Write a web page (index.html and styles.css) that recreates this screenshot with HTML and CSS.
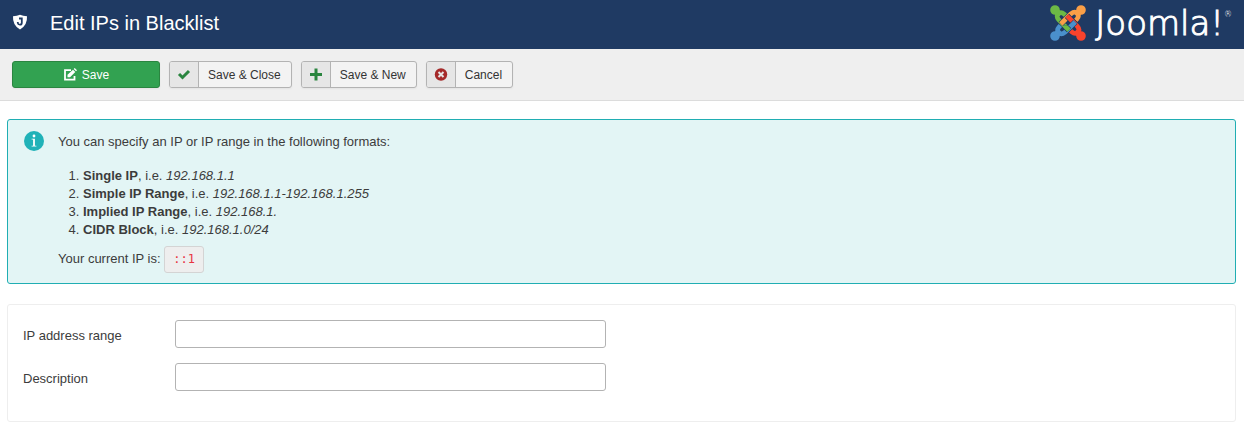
FILE: index.html
```
<!DOCTYPE html>
<html lang="en">
<head>
  <meta charset="UTF-8">
  <meta name="viewport" content="width=device-width, initial-scale=1">
  <title>Edit IPs in Blacklist</title>
  <link rel="stylesheet" href="styles.css">
</head>
<body>

  <header class="header">
    <svg class="header-icon" viewBox="0 0 16 16" aria-hidden="true">
      <path fill="#fff" d="M1 2.2Q5 2.2 8 .8q3 1.4 7 1.4.6 9-7 13.2Q.4 11.200 1 2.200z"/>
      <path fill="none" stroke="#1f3a63" stroke-width="1.800" d="M7 4.500h2.800v4.200q0 2-1.900 2T5.800 9V8"/>
    </svg>
    <h1 class="page-title">Edit IPs in Blacklist</h1>
    <div class="logo">
      <svg class="logo-mark" viewBox="0 0 36 36" aria-hidden="true">
        <defs>
          <g id="arm">
            <path class="gap" d="M9.500 15.700L19 25.200"/>
            <path class="band" d="M15.500 10.400L14 9Q11 6.300 8.300 8.800T8.800 15L19 25.200"/>
            <path class="head" d="M5 .2A4.800 4.800 0 0 1 9.800 5Q9.800 6.300 11.500 6.300L10 11 6.300 11.500Q6.300 9.800 5 9.800A4.800 4.800 0 0 1 5 .2z"/>
          </g>
          <clipPath id="weave"><path d="M14 20.500H23V29H14z"/></clipPath>
        </defs>
        <use href="#arm" class="green"/>
        <use href="#arm" class="orange" transform="rotate(90 18 18)"/>
        <use href="#arm" class="red" transform="rotate(180 18 18)"/>
        <use href="#arm" class="blue" transform="rotate(270 18 18)"/>
        <g clip-path="url(#weave)"><use href="#arm" class="green"/></g>
      </svg>
      <span class="logo-text">Joomla!<sup>®</sup></span>
    </div>
  </header>

  <div class="toolbar">
    <button type="button" class="btn btn-save">
      <svg class="icon" viewBox="0 0 14 14" aria-hidden="true">
        <path fill="none" stroke="currentColor" stroke-width="1.800" d="M8 2.200H2v9.500h9.500V8"/>
        <path fill="currentColor" d="M4.500 9.300V6.800L10 1.700l2.300 2.300L7 9.300zM10.700 1L11.700 0 14 2.300l-1 1z"/>
      </svg>
      Save
    </button>
    <button type="button" class="btn">
      <span class="btn-icon green">
        <svg class="icon" viewBox="0 0 14 14" aria-hidden="true"><path fill="none" stroke="currentColor" stroke-width="3" d="M2 6L5.500 9.500l6.500-6.500"/></svg>
      </span>
      <span class="btn-label">Save &amp; Close</span>
    </button>
    <button type="button" class="btn">
      <span class="btn-icon green">
        <svg class="icon" viewBox="0 0 14 14" aria-hidden="true"><path fill="none" stroke="currentColor" stroke-width="3" d="M1 6.500h12M7 .5v12"/></svg>
      </span>
      <span class="btn-label">Save &amp; New</span>
    </button>
    <button type="button" class="btn">
      <span class="btn-icon red">
        <svg class="icon" viewBox="0 0 14 14" aria-hidden="true">
          <circle cx="7" cy="6.500" r="6.200" fill="currentColor"/>
          <path stroke="#e6e6e6" stroke-width="2" d="M4.500 4l5 5M9.500 4l-5 5"/>
        </svg>
      </span>
      <span class="btn-label">Cancel</span>
    </button>
  </div>

  <main class="content">
    <div class="info">
      <svg class="info-icon" viewBox="0 0 20 20" aria-hidden="true">
        <circle cx="10" cy="10" r="10" fill="#20b2b8"/>
        <circle cx="10" cy="5" r="1.400" fill="#fff"/>
        <path fill="#fff" d="M7.600 7.800h3.300v6.900h1.500v.8H7.600v-.8h1.500V8.600H7.600z"/>
      </svg>
      <div class="info-body">
        <p>You can specify an IP or IP range in the following formats:</p>
        <ol>
          <li><strong>Single IP</strong>, i.e. <em>192.168.1.1</em></li>
          <li><strong>Simple IP Range</strong>, i.e. <em>192.168.1.1-192.168.1.255</em></li>
          <li><strong>Implied IP Range</strong>, i.e. <em>192.168.1.</em></li>
          <li><strong>CIDR Block</strong>, i.e. <em>192.168.1.0/24</em></li>
        </ol>
        <p>Your current IP is: <code>::1</code></p>
      </div>
    </div>

    <form class="panel">
      <div class="row">
        <label for="ip">IP address range</label>
        <input type="text" id="ip" name="ip">
      </div>
      <div class="row">
        <label for="description">Description</label>
        <input type="text" id="description" name="description">
      </div>
    </form>
  </main>

</body>
</html>
```

FILE: styles.css
```
*
{
  box-sizing:border-box
}
body
{
  margin:0;
  background:#fff;
  color:#3c3c3c;
  font:13px/18px "Liberation Sans", Arial, sans-serif
}
.header
{
  display:flex;
  align-items:center;
  height:49px;
  padding:0 12px;
  background:#1f3a63;
  color:#fff
}
.header-icon
{
  width:16px;
  height:16px;
  margin-bottom:6px
}
.page-title
{
  margin:0 0 4px 22px;
  font-size:20px;
  line-height:24px;
  font-weight:normal
}
.logo
{
  display:flex;
  align-items:center;
  gap:9px;
  margin-left:auto;
  padding-bottom:4px
}
.logo-mark
{
  width:36px;
  height:36px
}
.logo-text
{
  display:flex;
  font:200 34px/36px "DejaVu Sans", sans-serif;
  -webkit-text-stroke:1px #fff
}
.logo-text sup
{
  font-size:8px;
  line-height:20px;
  -webkit-text-stroke:0
}
.gap
{
  fill:none;
  stroke:#1f3a63;
  stroke-width:6
}
.band
{
  fill:none;
  stroke:currentColor;
  stroke-width:4.600
}
.head
{
  fill:currentColor
}
.logo-mark .green
{
  color:#6cb945
}
.logo-mark .orange
{
  color:#fa9f47
}
.logo-mark .red
{
  color:#f8432d
}
.logo-mark .blue
{
  color:#4a90cc
}
.toolbar
{
  display:flex;
  flex-wrap:wrap;
  gap:9px;
  padding:12px;
  background:#efefef;
  border-bottom:1px solid #dcdcdc
}
.btn
{
  display:flex;
  height:27px;
  padding:0;
  border:1px solid #b3b3b3;
  border-radius:3px;
  background:#f3f3f3;
  box-shadow:0 1px 2px rgba(0,0,0,.05);
  color:#333;
  font:12px/26px "Liberation Sans", Arial, sans-serif;
  overflow:hidden;
  cursor:pointer
}
.btn-save
{
  align-items:center;
  justify-content:center;
  gap:5px;
  width:148px;
  border-color:#2a8540;
  background:#32a251;
  color:#fff
}
.icon
{
  display:block;
  width:14px;
  height:14px
}
.btn-icon
{
  display:flex;
  align-items:center;
  justify-content:center;
  width:29px;
  height:25px;
  border-right:1px solid #b3b3b3;
  background:#e6e6e6
}
.btn-icon.green
{
  color:#2a853f
}
.btn-icon.red
{
  color:#a52a2a
}
.btn-label
{
  padding:0 10px 0 9px
}
.content
{
  padding:18px 8px 10px 7px
}
.info
{
  display:flex;
  gap:14px;
  margin-bottom:20px;
  padding:11px 16px 10px;
  border:1px solid #20aeb3;
  border-radius:3px;
  background:#e3f5f5
}
.info-icon
{
  flex:none;
  width:20px;
  height:20px
}
.info-body
{
  padding-top:2px
}
.info p
{
  margin:0
}
.info ol
{
  margin:16px 0 7px;
  padding-left:25px
}
.info code
{
  display:inline-block;
  padding:4px 8px;
  border:1px solid #d4d4d4;
  border-radius:3px;
  background:#eee;
  color:#e8333f;
  font:12px/17px "DejaVu Sans Mono", monospace
}
.panel
{
  padding:15px;
  border:1px solid #eee;
  border-radius:3px
}
.row
{
  display:grid;
  grid-template-columns:152px 36%;
  align-items:center;
  margin-bottom:15px
}
.row label
{
  padding-top:4px
}
.row input
{
  width:100%;
  height:28px;
  padding:4px 6px;
  border:1px solid #b3b3b3;
  border-radius:3px;
  background:#fff;
  color:inherit;
  font:inherit
}
```
